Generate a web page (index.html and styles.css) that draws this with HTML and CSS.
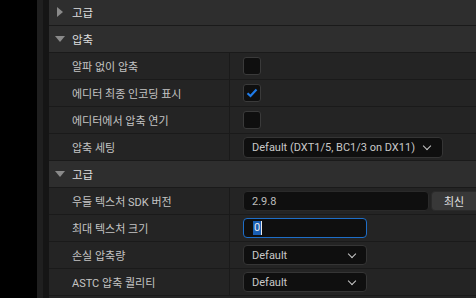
FILE: index.html
```html
<!DOCTYPE html>
<html lang="ko">
<head>
  <meta charset="UTF-8" />
  <title>텍스처 압축 설정</title>
  <link rel="stylesheet" href="styles.css">
</head>
<body>
<div class="gutter"></div>
<div class="strip"></div>
<div class="strip dark"></div>

<div class="panel">
  <div class="section first"><span class="arrow right"></span>고급</div>

  <div class="section"><span class="arrow down"></span>압축</div>
  <div class="row">
    <div class="label">알파 없이 압축</div>
    <div class="value"><span class="check"></span></div>
  </div>
  <div class="row">
    <div class="label">에디터 최종 인코딩 표시</div>
    <div class="value">
      <span class="check">
        <svg width="12" height="10" viewBox="0 0 12 10"><path d="M1.5 5.2 L4.5 8 L10.5 1.5" fill="none" stroke="#1f7be8" stroke-width="2.2"/></svg>
      </span>
    </div>
  </div>
  <div class="row">
    <div class="label">에디터에서 압축 연기</div>
    <div class="value"><span class="check"></span></div>
  </div>
  <div class="row">
    <div class="label">압축 세팅</div>
    <div class="value">
      <div class="combo wide">Default (DXT1/5, BC1/3 on DX11)<span class="chev"></span></div>
    </div>
  </div>

  <div class="section"><span class="arrow down"></span>고급</div>
  <div class="row">
    <div class="label">우들 텍스처 SDK 버전</div>
    <div class="value">
      <div class="field version">2.9.8</div>
      <button class="btn">최신</button>
    </div>
  </div>
  <div class="row">
    <div class="label">최대 텍스처 크기</div>
    <div class="value">
      <div class="field focus"><span class="sel">0</span></div>
    </div>
  </div>
  <div class="row">
    <div class="label">손실 압축량</div>
    <div class="value">
      <div class="combo">Default<span class="chev"></span></div>
    </div>
  </div>
  <div class="row">
    <div class="label">ASTC 압축 퀄리티</div>
    <div class="value">
      <div class="combo">Default<span class="chev"></span></div>
    </div>
  </div>
  <div class="row"></div>
</div>
</body>
</html>
```

FILE: styles.css
```css
* {
  box-sizing: border-box;
}

body {
  margin: 0;
  display: flex;
  height: 298px;
  overflow: hidden;
  background: #000;
  font-family: Roboto, "Noto Sans CJK KR", sans-serif;
  font-size: 11px;
}

.gutter {
  width: 37px;
  flex-shrink: 0;
  background: #000;
}

.strip {
  width: 6px;
  flex-shrink: 0;
  background: #1f1f1f;
}

.strip.dark {
  background: #151515;
}

.panel {
  flex: 1;
  min-width: 0;
  overflow: hidden;
  display: flex;
  flex-direction: column;
  background: #1a1a1a;
  gap: 1px;
}

.section {
  height: 26px;
  flex-shrink: 0;
  display: flex;
  align-items: center;
  padding-left: 7px;
  background: #2e2e2e;
  color: #dedede;
  font-size: 11.5px;
}

.section.first {
  height: 25px;
  padding-bottom: 1px;
}

.arrow {
  width: 0;
  height: 0;
}

.arrow.right {
  border-top: 5px solid transparent;
  border-bottom: 5px solid transparent;
  border-left: 6px solid #8a8a8a;
  margin-left: 1px;
  margin-right: 9px;
}

.arrow.down {
  border-left: 5px solid transparent;
  border-right: 5px solid transparent;
  border-top: 6px solid #8a8a8a;
  margin-left: -1px;
  margin-right: 7px;
}

.row {
  height: 26px;
  flex-shrink: 0;
  display: grid;
  grid-template-columns: 181px 1fr;
  background: #242424;
}

.label {
  display: flex;
  align-items: center;
  padding-left: 23px;
  color: #c4c4c4;
  border-right: 1px solid #1a1a1a;
  white-space: nowrap;
}

.value {
  display: flex;
  align-items: center;
  padding-left: 13px;
  gap: 2px;
}

.check {
  width: 18px;
  height: 18px;
  border: 1px solid #3a3a3a;
  border-radius: 3px;
  background: #0f0f0f;
  display: flex;
  align-items: center;
  justify-content: center;
}

.combo,
.field {
  height: 20px;
  width: 124px;
  flex-shrink: 0;
  border: 1px solid #353535;
  border-radius: 4px;
  background: #0f0f0f;
  color: #c8c8c8;
  display: flex;
  align-items: center;
  padding-left: 8px;
  position: relative;
  white-space: nowrap;
}

.combo.wide {
  width: 200px;
  height: 21px;
}

.chev {
  position: absolute;
  right: 11px;
  top: 5px;
  width: 6px;
  height: 6px;
  border-right: 1.6px solid #c8c8c8;
  border-bottom: 1.6px solid #c8c8c8;
  transform: rotate(45deg);
}

.combo.wide .chev {
  right: 12px;
}

.field.version {
  width: 186px;
  border-color: #2a2a2a;
  color: #bdbdbd;
}

.field.focus {
  border-color: #1e6ec8;
  padding-left: 9px;
}

.sel {
  background: #1a5fb4;
  color: #e8e8e8;
  line-height: 14px;
  padding: 0 1px;
  border-right: 1px solid #e8e8e8;
}

.btn {
  height: 20px;
  width: 60px;
  flex-shrink: 0;
  border: 1px solid #2a2a2a;
  border-radius: 4px;
  background: #383838;
  color: #e0e0e0;
  font: inherit;
  text-align: left;
  padding-left: 12px;
}
```
